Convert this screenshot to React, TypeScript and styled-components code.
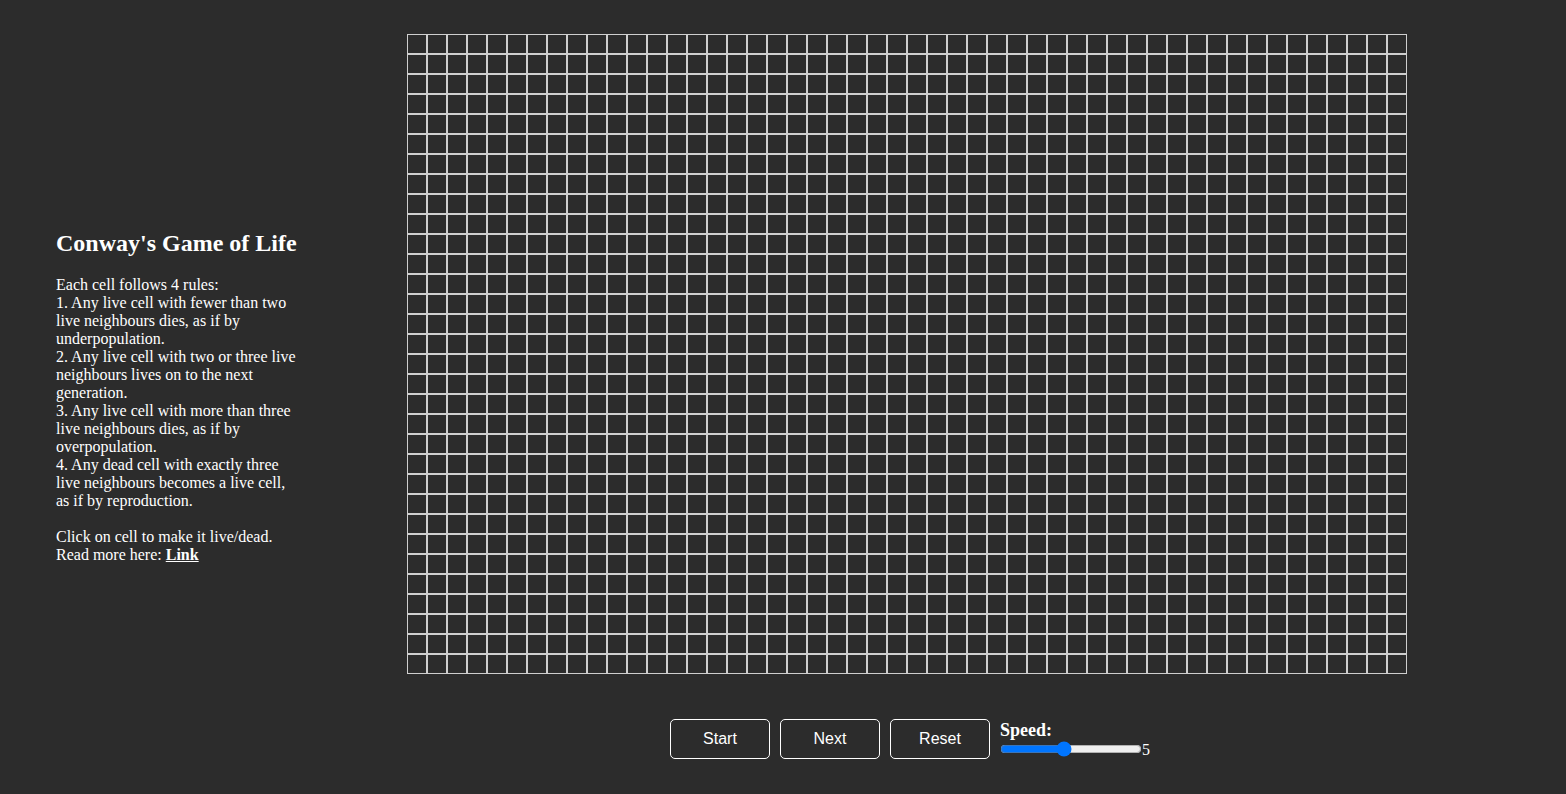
import React, { useState } from "react";
import styled, { createGlobalStyle } from "styled-components";

const Global = createGlobalStyle`
  html, body { margin: 0; padding: 0; background: #2c2c2c; }
  body { color: #ffffff; font-family: "Liberation Serif", "Times New Roman", serif; font-size: 16px; }
`;

const COLS = 50;
const ROWS = 32;

const Page = styled.div`
  display: flex;
  align-items: flex-start;
  padding: 34px 0 0 56px;
  min-height: 760px;
`;

const Sidebar = styled.aside`
  width: 243px;
  padding-top: 194px;
  line-height: 18px;
`;

const Title = styled.h2`
  margin: 0 0 18px;
  font-size: 24px;
  line-height: 30px;
  font-weight: bold;
  white-space: nowrap;
`;

const Rules = styled.p`
  margin: 0;
`;

const Anchor = styled.a`
  color: #ffffff;
  font-weight: bold;
  text-decoration: underline;
`;

const Main = styled.main`
  margin-left: 108px;
  display: flex;
  flex-direction: column;
  width: 1000px;
`;

const Board = styled.div`
  display: grid;
  grid-template-columns: repeat(${COLS}, 20px);
  grid-auto-rows: 20px;
  width: 1000px;
`;

const Cell = styled.div<{ $alive: boolean }>`
  box-sizing: border-box;
  border: 1px solid #cfcfcf;
  background: ${(p) => (p.$alive ? "#ffffff" : "transparent")};
  cursor: pointer;
`;

const Controls = styled.div`
  margin-top: 45px;
  display: flex;
  justify-content: center;
  align-items: flex-start;
  gap: 10px;
  padding-left: 6px;
`;

const Button = styled.button`
  width: 100px;
  height: 40px;
  box-sizing: border-box;
  background: transparent;
  border: 1px solid #ffffff;
  border-radius: 5px;
  color: #ffffff;
  font-family: "Liberation Sans", Arial, sans-serif;
  font-size: 16px;
  cursor: pointer;
`;

const SpeedBox = styled.div`
  display: flex;
  flex-direction: column;
  padding-top: 1px;
`;

const SpeedLabel = styled.label`
  font-weight: bold;
  font-size: 18px;
  line-height: 21px;
`;

const SliderRow = styled.div`
  display: flex;
  align-items: center;
  line-height: 18px;
  margin-top: -2px;
`;

const Range = styled.input`
  width: 142px;
  margin: 0;
  accent-color: #0075ff;
`;

const Value = styled.span`
  font-size: 16px;
  margin-top: 2px;
`;

export default function App() {
  const [cells, setCells] = useState<boolean[]>(() => Array(COLS * ROWS).fill(false));
  const [speed, setSpeed] = useState(5);

  const toggle = (i: number) =>
    setCells((c) => {
      const n = c.slice();
      n[i] = !n[i];
      return n;
    });

  return (
    <>
      <Global />
      <Page>
        <Sidebar>
          <Title>Conway's Game of Life</Title>
          <Rules>
            Each cell follows 4 rules:
            <br />
            1. Any live cell with fewer than two live neighbours dies, as if by underpopulation.
            <br />
            2. Any live cell with two or three live neighbours lives on to the next generation.
            <br />
            3. Any live cell with more than three live neighbours dies, as if by overpopulation.
            <br />
            4. Any dead cell with exactly three live neighbours becomes a live cell, as if by reproduction.
            <br />
            <br />
            Click on cell to make it live/dead.
            <br />
            Read more here: <Anchor href="#">Link</Anchor>
          </Rules>
        </Sidebar>
        <Main>
          <Board>
            {cells.map((alive, i) => (
              <Cell key={i} $alive={alive} onClick={() => toggle(i)} />
            ))}
          </Board>
          <Controls>
            <Button>Start</Button>
            <Button>Next</Button>
            <Button>Reset</Button>
            <SpeedBox>
              <SpeedLabel htmlFor="speed">Speed:</SpeedLabel>
              <SliderRow>
                <Range
                  id="speed"
                  type="range"
                  min={1}
                  max={10}
                  value={speed}
                  onChange={(e) => setSpeed(Number(e.target.value))}
                />
                <Value>{speed}</Value>
              </SliderRow>
            </SpeedBox>
          </Controls>
        </Main>
      </Page>
    </>
  );
}
